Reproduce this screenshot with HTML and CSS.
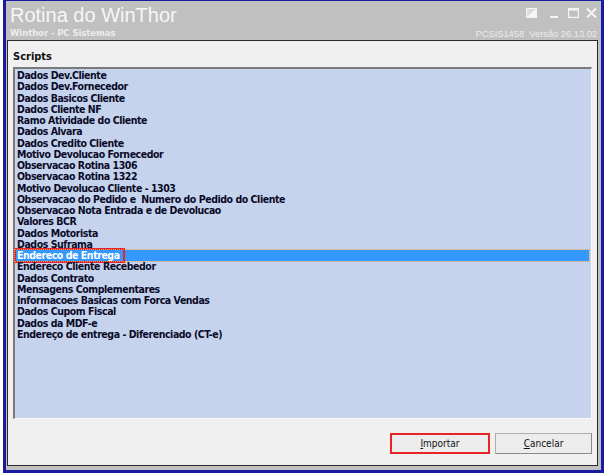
FILE: index.html
```html
<!DOCTYPE html>
<html>
<head>
<meta charset="utf-8">
<link rel="stylesheet" href="styles.css">
</head>
<body>
<div class="window">
  <div class="titlebar">
    <div class="title-left">
      <div class="title">Rotina do WinThor</div>
      <div class="subtitle">Winthor - PC Sistemas</div>
    </div>
    <div class="title-right">
      <div class="controls">
        <svg width="11" height="10" viewBox="0 0 11 10"><rect x="0.5" y="0.5" width="10" height="9" fill="#dcdcdc" stroke="#f4f4f4"/><polygon points="0.5,9.5 10.5,0.5 10.5,9.5" fill="#f6f6f6"/></svg>
        <svg width="11" height="10" viewBox="0 0 11 10"><rect x="1" y="8" width="8" height="2" fill="#f4f4f4"/></svg>
        <svg width="11" height="10" viewBox="0 0 11 10"><rect x="0.6" y="0.6" width="9.8" height="8.8" fill="none" stroke="#f4f4f4" stroke-width="1.2"/><rect x="0.6" y="0.6" width="9.8" height="2" fill="#f4f4f4"/></svg>
        <svg width="11" height="10" viewBox="0 0 11 10"><path d="M1 0.5 L10 9.5 M10 0.5 L1 9.5" stroke="#f4f4f4" stroke-width="2"/></svg>
      </div>
      <div class="version">PCSIS1458&nbsp; Versão 26.13.02</div>
    </div>
  </div>
  <div class="panel">
    <div class="section-label">Scripts</div>
    <div class="listbox">
      <div class="item">Dados Dev.Cliente</div>
      <div class="item">Dados Dev.Fornecedor</div>
      <div class="item">Dados Basicos Cliente</div>
      <div class="item">Dados Cliente NF</div>
      <div class="item">Ramo Atividade do Cliente</div>
      <div class="item">Dados Alvara</div>
      <div class="item">Dados Credito Cliente</div>
      <div class="item">Motivo Devolucao Fornecedor</div>
      <div class="item">Observacao Rotina 1306</div>
      <div class="item">Observacao Rotina 1322</div>
      <div class="item">Motivo Devolucao Cliente - 1303</div>
      <div class="item">Observacao do Pedido e&nbsp; Numero do Pedido do Cliente</div>
      <div class="item">Observacao Nota Entrada e de Devolucao</div>
      <div class="item">Valores BCR</div>
      <div class="item">Dados Motorista</div>
      <div class="item">Dados Suframa</div>
      <div class="item selected"><span class="mark">Endereco de Entrega</span></div>
      <div class="item">Endereco Cliente Recebedor</div>
      <div class="item">Dados Contrato</div>
      <div class="item">Mensagens Complementares</div>
      <div class="item">Informacoes Basicas com Forca Vendas</div>
      <div class="item">Dados Cupom Fiscal</div>
      <div class="item">Dados da MDF-e</div>
      <div class="item">Endereço de entrega - Diferenciado (CT-e)</div>
    </div>
    <div class="buttons">
      <button class="btn btn-mark"><u>I</u>mportar</button>
      <button class="btn"><u>C</u>ancelar</button>
    </div>
  </div>
</div>
</body>
</html>
```

FILE: styles.css
```css
html, body {
  margin: 0;
  padding: 0;
  background: #ffffff;
}
body {
  width: 615px;
  height: 475px;
  overflow: hidden;
}
.window {
  margin-left: 3px;
  width: 591px;
  height: 465px;
  background: #c0c0c0;
  border-style: solid;
  border-color: #1a1aa0;
  border-width: 1px 3px 3px 3px;
  padding: 0 3px 4px 1px;
  display: flex;
  flex-direction: column;
  font-family: "DejaVu Sans Condensed", "DejaVu Sans", sans-serif;
}
.titlebar {
  height: 39px;
  display: flex;
  justify-content: space-between;
  padding: 0 1px 0 3px;
}
.title {
  font-family: "Liberation Sans", Arial, sans-serif;
  font-size: 20px;
  color: #f6f6f6;
  line-height: 22px;
  margin-top: 3px;
}
.subtitle {
  font-size: 9.5px;
  font-weight: bold;
  color: #ececec;
  margin-top: 1px;
  line-height: 12px;
  letter-spacing: -0.1px;
}
.title-right {
  display: flex;
  flex-direction: column;
  align-items: flex-end;
}
.controls {
  display: flex;
  gap: 7px;
  margin-top: 7px;
  height: 10px;
}
.controls svg {
  display: block;
}
.controls svg:nth-child(2) {
  margin-left: 5px;
  margin-right: 1px;
}
.version {
  font-family: "Liberation Sans", Arial, sans-serif;
  font-size: 9.3px;
  color: #ececec;
  margin-top: 10px;
  line-height: 12px;
}
.panel {
  flex: 1;
  background: #f0f0f0;
  border: 1px solid #2a2a2a;
  display: flex;
  flex-direction: column;
  padding: 0 5px;
}
.section-label {
  font-size: 11px;
  font-weight: bold;
  color: #111;
  margin-top: 9px;
  line-height: 13px;
  height: 17px;
}
.listbox {
  height: 348px;
  background: #c5d4ec;
  border-top: 2px solid #7a7a7a;
  border-left: 2px solid #7a7a7a;
  border-right: 1px solid #f8f8f8;
  border-bottom: 1px solid #f8f8f8;
  padding-top: 1px;
}
.item {
  font-size: 10.5px;
  font-weight: bold;
  color: #0a0a28;
  line-height: 11.26px;
  height: 11.26px;
  padding-left: 2px;
  white-space: nowrap;
  letter-spacing: -0.45px;
}
.item.selected {
  background: #3399ff;
  color: #ffffff;
  margin-right: 2px;
  outline: 1px dotted #d8a060;
}
.mark {
  display: inline-block;
  outline: 2px solid #e8232a;
  padding-right: 3px;
  margin-left: -1px;
  padding-left: 1px;
}
.buttons {
  display: flex;
  justify-content: flex-end;
  gap: 5px;
  margin-top: 14px;
}
.btn {
  width: 97px;
  height: 21px;
  background: #ececec;
  border: 1px solid #adadad;
  border-right-color: #8a8a8a;
  border-bottom-color: #8a8a8a;
  font-family: "DejaVu Sans Condensed", "DejaVu Sans", sans-serif;
  font-size: 10px;
  color: #111;
  padding: 0;
}
.btn-mark {
  width: 100px;
  border: 2px solid #e8232a;
}
```
